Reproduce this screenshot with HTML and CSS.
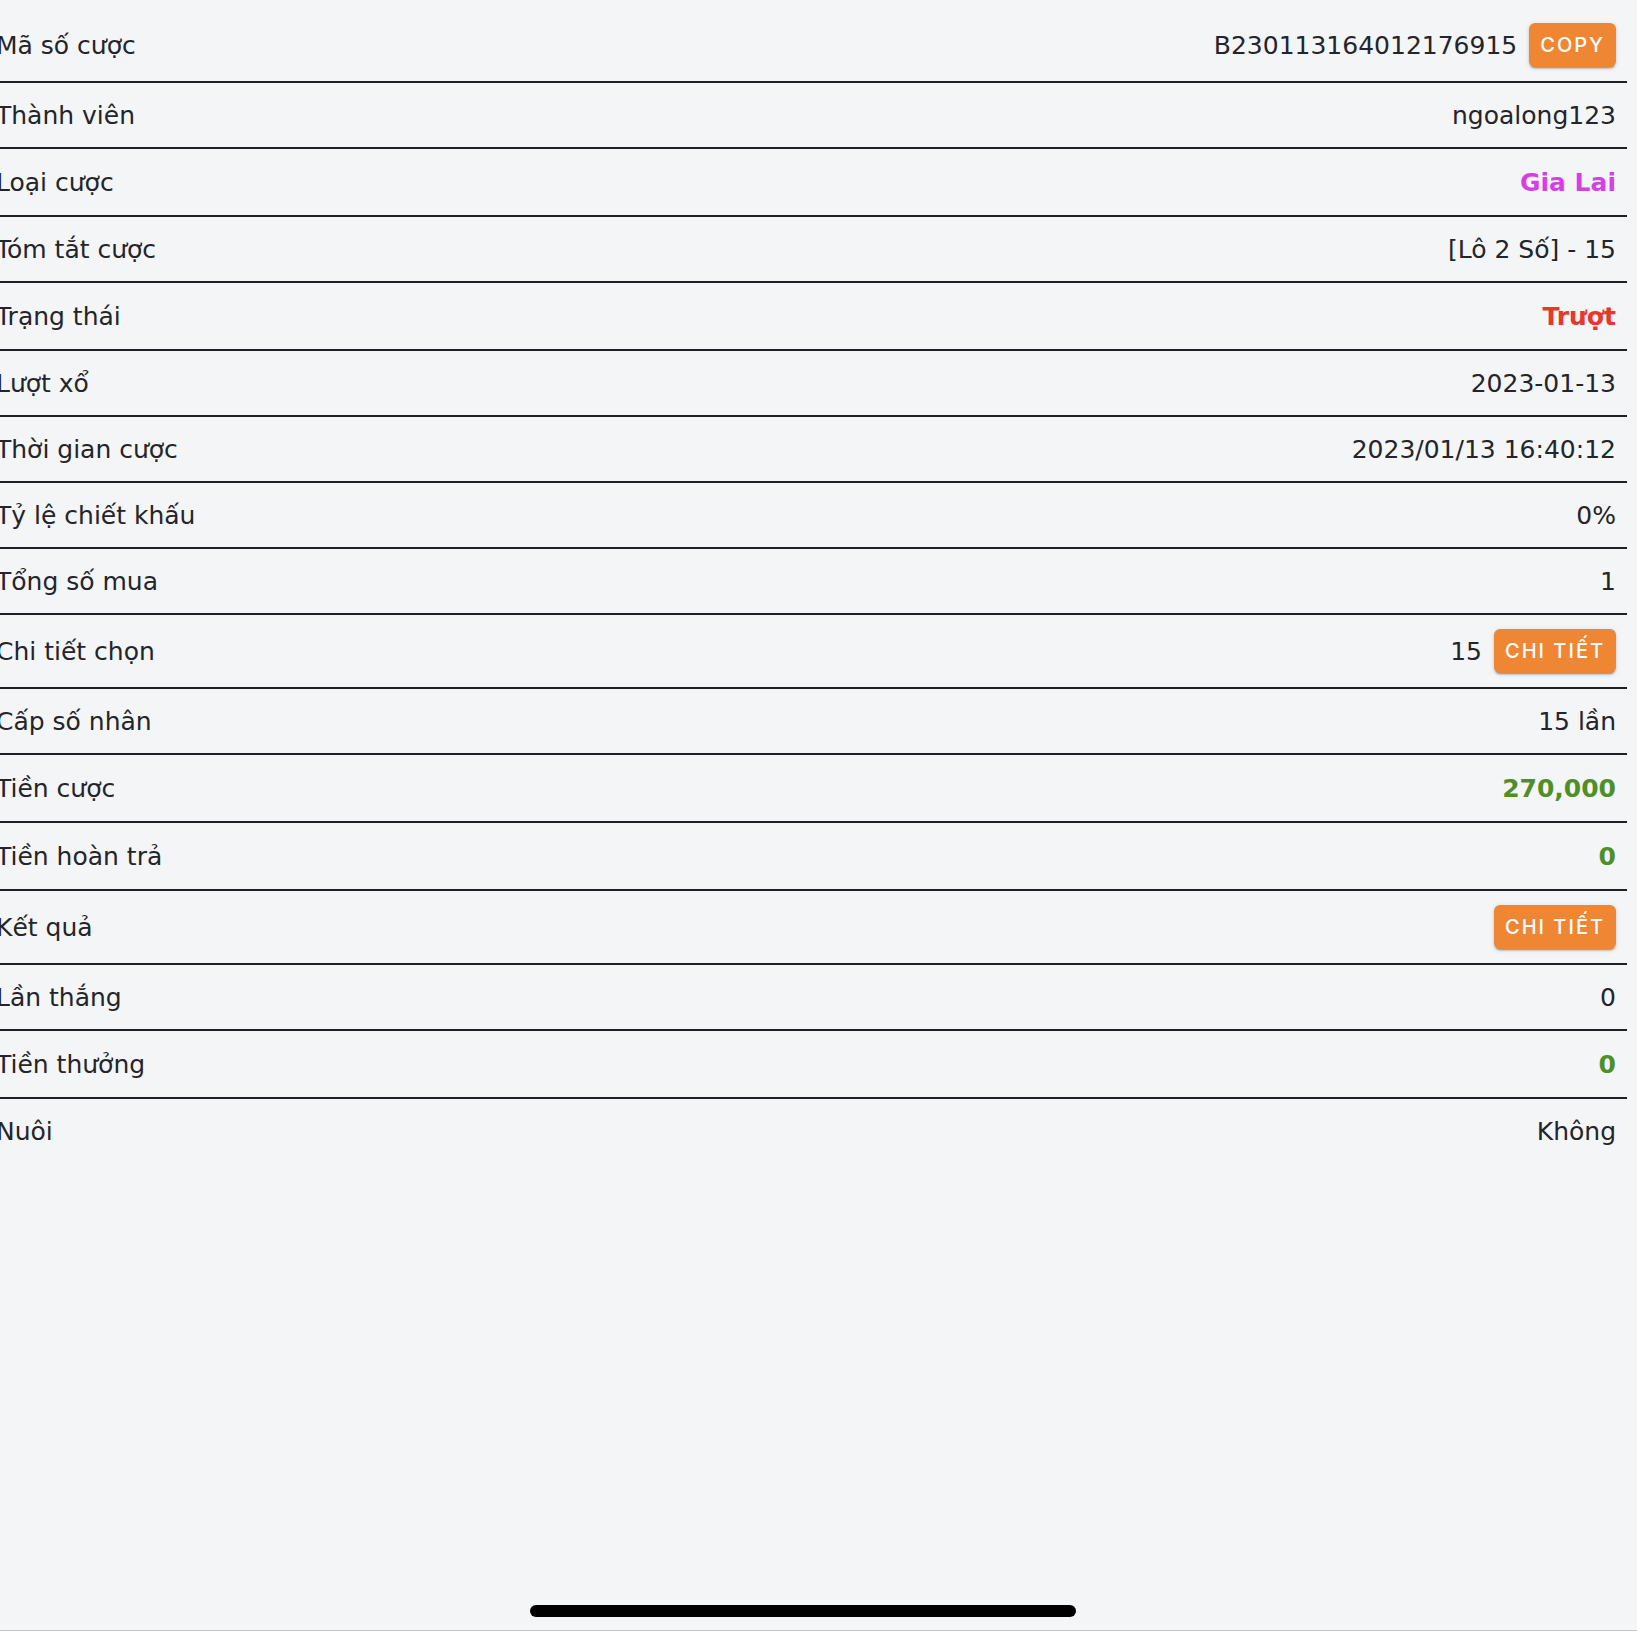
FILE: index.html
```html
<!DOCTYPE html>
<html>
<head>
    <title>Chi tiết cược</title>
    <meta charset="utf-8" />
    <link rel="stylesheet" href="styles.css">
</head>
<body>
    <div class="screen">
        <div class="bet-list">
            <div class="bet-row">
                <span class="bet-label">Mã số cược</span>
                <span class="bet-value">B230113164012176915 <button class="orange-button">Copy</button></span>
            </div>
            <div class="bet-row">
                <span class="bet-label">Thành viên</span>
                <span class="bet-value">ngoalong123</span>
            </div>
            <div class="bet-row">
                <span class="bet-label">Loại cược</span>
                <span class="bet-value strong pink">Gia Lai</span>
            </div>
            <div class="bet-row">
                <span class="bet-label">Tóm tắt cược</span>
                <span class="bet-value">[Lô 2 Số] - 15</span>
            </div>
            <div class="bet-row">
                <span class="bet-label">Trạng thái</span>
                <span class="bet-value strong red">Trượt</span>
            </div>
            <div class="bet-row">
                <span class="bet-label">Lượt xổ</span>
                <span class="bet-value">2023-01-13</span>
            </div>
            <div class="bet-row">
                <span class="bet-label">Thời gian cược</span>
                <span class="bet-value">2023/01/13 16:40:12</span>
            </div>
            <div class="bet-row">
                <span class="bet-label">Tỷ lệ chiết khấu</span>
                <span class="bet-value">0%</span>
            </div>
            <div class="bet-row">
                <span class="bet-label">Tổng số mua</span>
                <span class="bet-value">1</span>
            </div>
            <div class="bet-row">
                <span class="bet-label">Chi tiết chọn</span>
                <span class="bet-value">15 <button class="orange-button">Chi tiết</button></span>
            </div>
            <div class="bet-row">
                <span class="bet-label">Cấp số nhân</span>
                <span class="bet-value">15 lần</span>
            </div>
            <div class="bet-row">
                <span class="bet-label">Tiền cược</span>
                <span class="bet-value strong green">270,000</span>
            </div>
            <div class="bet-row">
                <span class="bet-label">Tiền hoàn trả</span>
                <span class="bet-value strong green">0</span>
            </div>
            <div class="bet-row">
                <span class="bet-label">Kết quả</span>
                <span class="bet-value"><button class="orange-button">Chi tiết</button></span>
            </div>
            <div class="bet-row">
                <span class="bet-label">Lần thắng</span>
                <span class="bet-value">0</span>
            </div>
            <div class="bet-row">
                <span class="bet-label">Tiền thưởng</span>
                <span class="bet-value strong green">0</span>
            </div>
            <div class="bet-row">
                <span class="bet-label">Nuôi</span>
                <span class="bet-value">Không</span>
            </div>
        </div>
        <div class="home-indicator"></div>
    </div>
</body>
</html>
```

FILE: styles.css
```css
html,body {
    margin: 0;
    height: 100%;
    overflow: hidden;
    font-family: 'DejaVu Sans', 'Liberation Sans', Arial, sans-serif;
    font-size: 25px;
    background-color: #f4f5f7;
    color: #23252a;
}

.screen {
    position: relative;
    box-sizing: border-box;
    height: 1631px;
    padding-top: 9px;
    border-bottom: 1px solid #c6c7ca;
}

/* list is pushed a bit past the left edge, like the original screen */
.bet-list {
    margin: 0 10px 0 -14px;
}

.bet-row {
    display: flex;
    justify-content: space-between;
    align-items: center;
    padding: 15px 11px 13px 10px;
    line-height: 36px;
    border-bottom: 2px solid #1f2025;
}

.bet-row:last-child {
    border-bottom: none;
}

.bet-value {
    display: flex;
    align-items: center;
    gap: 12px;
}

.strong {
    font-weight: 700;
    line-height: 38px;
}

.pink {
    color: #d63fe8;
}

.red {
    color: #e8372c;
}

.green {
    color: #4f8f27;
}

.orange-button {
    height: 44px;
    margin: -1px 0 1px;
    padding: 0 11px;
    border: none;
    border-radius: 6px;
    background-color: #ee8633;
    color: #fff;
    font-family: Inter, 'Liberation Sans', Arial, sans-serif;
    font-size: 20px;
    font-weight: 500;
    letter-spacing: 2px;
    text-transform: uppercase;
    box-shadow: 0 3px 1px -2px rgba(0, 0, 0, 0.2), 0 2px 2px 0 rgba(0, 0, 0, 0.14), 0 1px 5px 0 rgba(0, 0, 0, 0.12);
    cursor: pointer;
}

.home-indicator {
    position: absolute;
    left: 530px;
    top: 1605px;
    width: 546px;
    height: 12px;
    border-radius: 6px;
    background-color: #000;
}
```
